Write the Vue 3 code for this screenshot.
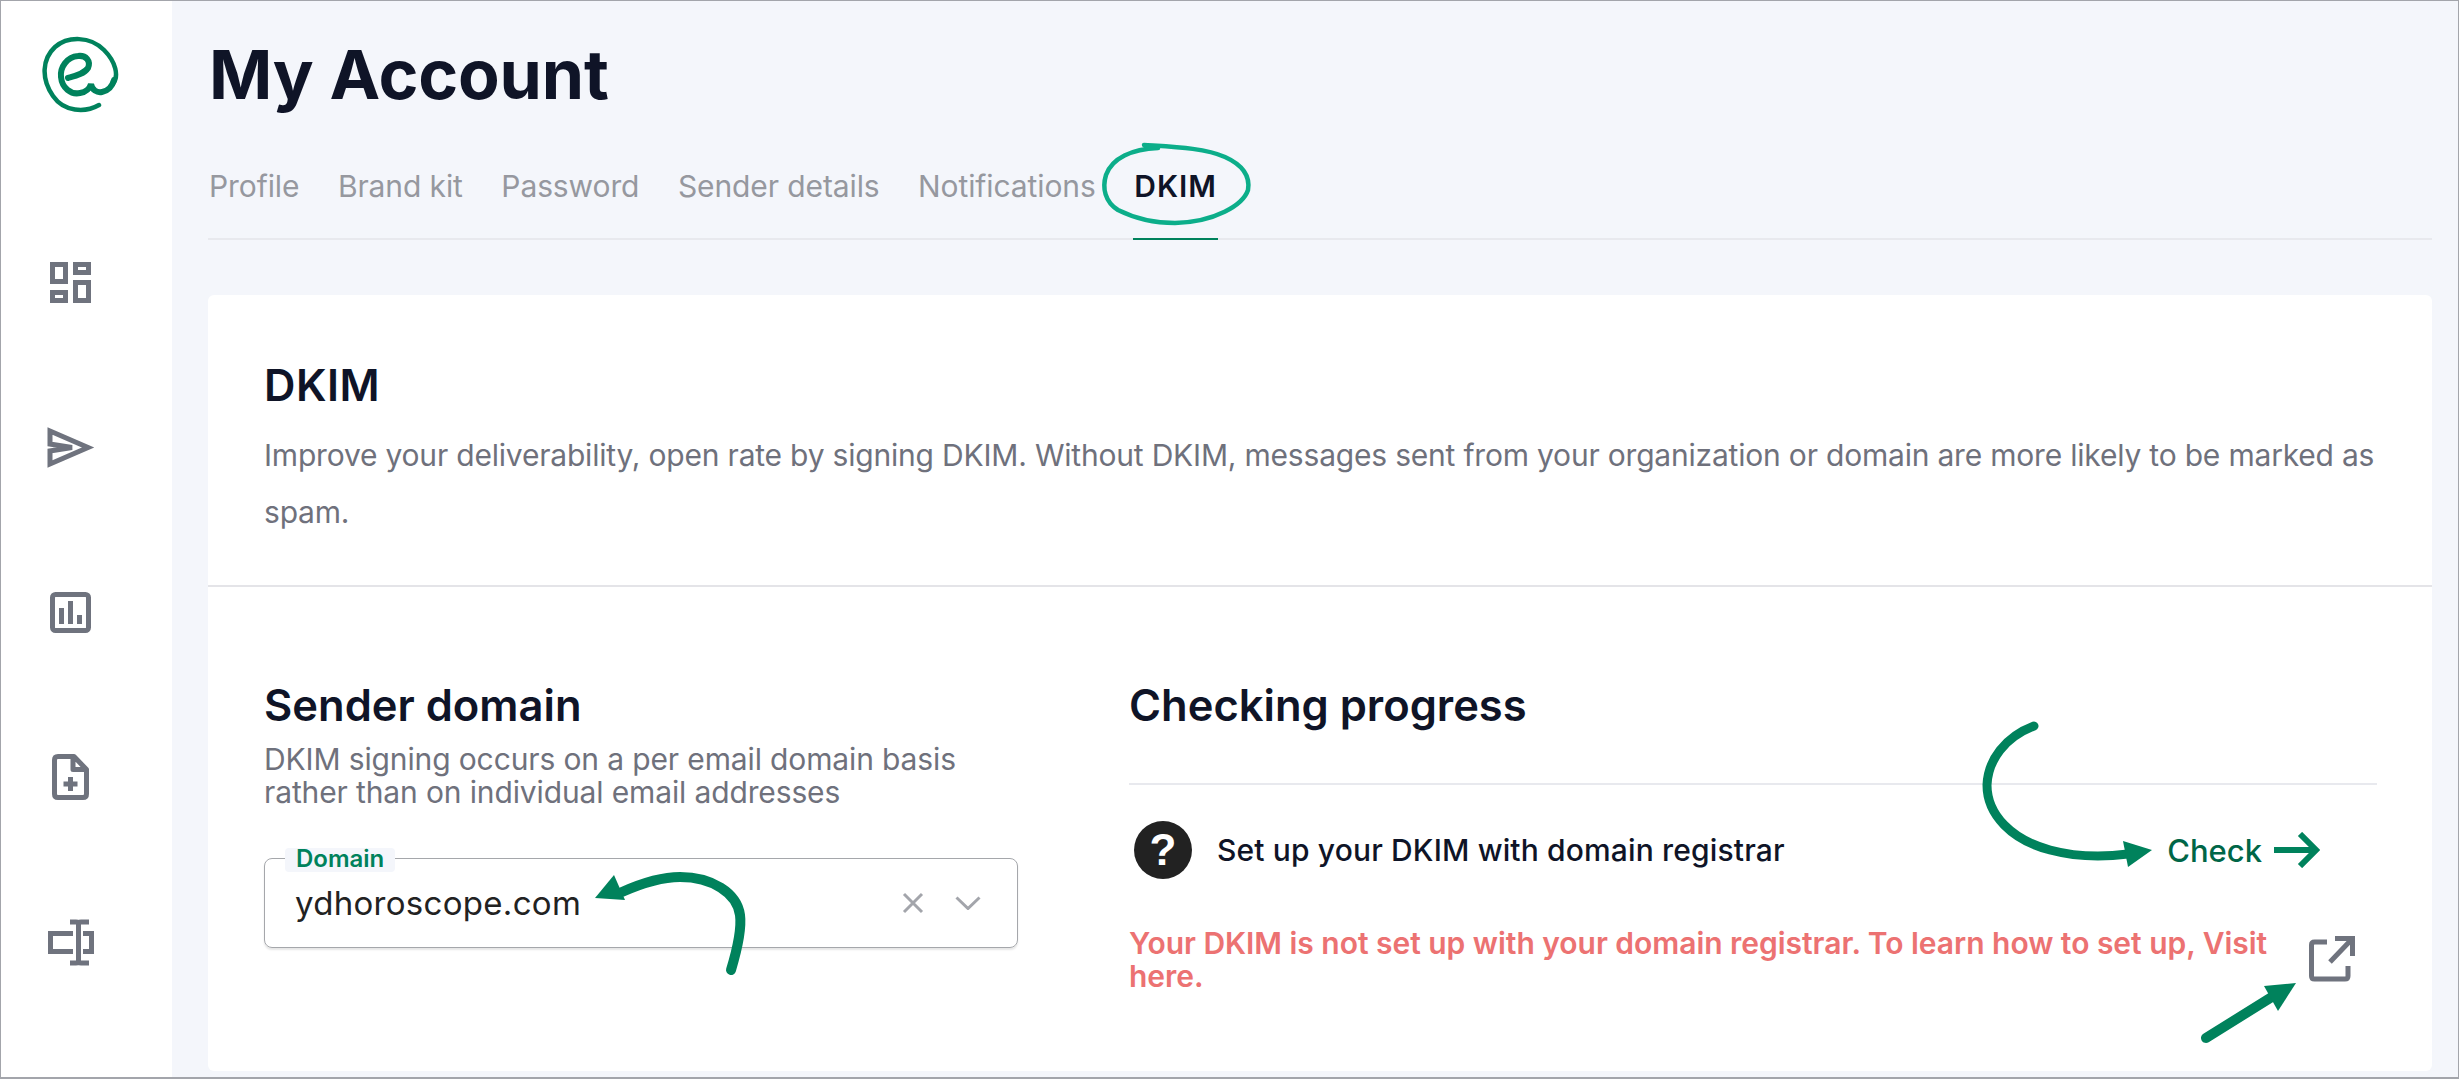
<script setup>
const tabs = ['Profile', 'Brand kit', 'Password', 'Sender details', 'Notifications']
</script>

<template>
  <div class="app">
    <aside class="side">
      <svg class="logo" viewBox="40 34 80 80" fill="none" stroke="#00825c" stroke-linecap="round">
        <path stroke-width="4.500" d="M99 105C85 113 64 112 53 96C41 79 42 59 55 47C68 36 90 36 104 50C116 62 119 76 113 84" />
        <path stroke-width="6" d="M68 78C75 76 84 74 88 68C91 61 86 55 78 56C67 57 60 67 61 77C62 88 71 95 80 93C86 92 90 88 91 84C92 90 97 93 102 92C108 91 112 87 114 80" />
      </svg>
      <nav class="nav">
        <div class="nav-item">
          <svg viewBox="40 251 60 60" fill="none" stroke="#6f737e" stroke-width="5">
            <rect x="52.500" y="263.500" width="13" height="17" />
            <rect x="75.500" y="263.500" width="13" height="8" />
            <rect x="52.500" y="291.500" width="13" height="8" />
            <rect x="75.500" y="281.500" width="13" height="18" />
          </svg>
        </div>
        <div class="nav-item">
          <svg viewBox="40 416 60 60" fill="none" stroke="#6f737e" stroke-width="5">
            <path d="M50 430L88 446.500L50 463V450L72 446.500L50 443Z" />
          </svg>
        </div>
        <div class="nav-item">
          <svg viewBox="40 581 60 60" fill="none" stroke="#6f737e" stroke-width="5">
            <rect x="52.500" y="593.500" width="36" height="36" rx="3" />
            <path d="M61.500 607V623M70.500 600V623M79.500 614V623" />
          </svg>
        </div>
        <div class="nav-item">
          <svg viewBox="40 747 60 60" fill="none" stroke="#6f737e" stroke-width="5" stroke-linejoin="round">
            <path d="M74 756.500H58Q54.500 756.500 54.500 760V794Q54.500 797.500 58 797.500H83Q86.500 797.500 86.500 794V769.500ZM73 756.500V769.500H86.500" />
            <path d="M70.500 777V791M63.500 784H77.500" />
          </svg>
        </div>
        <div class="nav-item">
          <svg viewBox="40 912 60 60" fill="none" stroke="#6f737e" stroke-width="5">
            <path d="M73 933.500H50.500V951.500H73M83 933.500H91.500V951.500H83" />
            <path d="M78.500 925V960M70 922H76Q78.500 922 78.500 925Q78.500 922 81 922H89M70 963H76Q78.500 963 78.500 960Q78.500 963 81 963H89" />
          </svg>
        </div>
      </nav>
    </aside>

    <main class="main">
      <h1 class="title">My Account</h1>
      <div class="tabs">
        <span v-for="t in tabs" :key="t" class="tab">{{ t }}</span>
        <span class="tab active">DKIM</span>
      </div>

      <section class="card">
        <header class="card-head">
          <h2 class="h2 wide">DKIM</h2>
          <p class="lead">Improve your deliverability, open rate by signing DKIM. Without DKIM, messages sent from your organization or domain are more likely to be marked as spam.</p>
        </header>
        <div class="card-body">
          <div class="col-left">
            <h2 class="h2">Sender domain</h2>
            <p class="sub">DKIM signing occurs on a per email domain basis<br />rather than on individual email addresses</p>
            <div class="select">
              <span class="float">Domain</span>
              <span class="value">ydhoroscope.com</span>
              <svg class="x" viewBox="0 0 22 22" fill="none" stroke="#a3a5ab" stroke-width="3"><path d="M2 2L20 20M20 2L2 20" /></svg>
              <svg class="chev" viewBox="0 0 26 14" fill="none" stroke="#a3a5ab" stroke-width="3"><path d="M1.500 1.500L13 12.500L24.500 1.500" /></svg>
            </div>
          </div>
          <div class="col-right">
            <h2 class="h2">Checking progress</h2>
            <div class="rule"></div>
            <div class="row">
              <span class="q">?</span>
              <span class="step">Set up your DKIM with domain registrar</span>
              <span class="check">Check</span>
              <svg class="check-arrow" viewBox="0 0 46 36" fill="none" stroke="#00825c" stroke-width="6"><path d="M0 18H42M26 2L42 18L26 34" /></svg>
            </div>
            <div class="err">
              <p class="err-text">Your DKIM is not set up with your domain registrar. To learn how to set up, Visit here.</p>
              <svg class="ext" viewBox="0 0 46 46" fill="none" stroke="#6f737e" stroke-width="5">
                <path d="M18 6H5.500Q2.500 6 2.500 9V40Q2.500 43 5.500 43H36Q39 43 39 40V30" />
                <path d="M26 2.500H43.500V20M43.500 2.500L21 26" />
              </svg>
            </div>
          </div>
        </div>
      </section>
    </main>

    <svg class="overlay" viewBox="0 0 2459 1079" fill="none">
      <path stroke="#0cae8a" stroke-width="4.500" stroke-linecap="round" d="M1144 145C1175 147 1205 148 1225 157C1245 166 1250 178 1248 190C1243 205 1215 222 1175 223C1150 223 1130 216 1118 210C1105 202 1102 188 1106 175C1112 158 1132 149 1158 148" />
      <g stroke="#00825c" stroke-width="9" stroke-linecap="round">
        <path stroke-width="10" d="M731 970C737 950 742 930 740 915C737 893 712 877 680 877C660 877 640 884 622 892" />
        <path d="M2034 726C2005 737 1988 760 1987 785C1987 815 2012 840 2050 850C2080 858 2105 857 2128 854" />
        <path stroke-width="10" d="M2206 1038L2275 995" />
      </g>
      <g fill="#00825c">
        <path d="M595 898L614 875L625 900Z" />
        <path d="M2152 850L2123 841L2128 867Z" />
        <path d="M2296 983L2264 986L2278 1011Z" />
      </g>
    </svg>
  </div>
</template>

<style>
html, body { margin: 0; background: #f4f6fb; }
</style>

<style scoped>
.app {
  position: relative;
  box-sizing: border-box;
  width: 2459px;
  height: 1079px;
  border: 1px solid #a3a5ab;
  border-bottom-width: 2px;
  display: flex;
  overflow: hidden;
  background: #f4f6fb;
  font-family: Inter, "Liberation Sans", sans-serif;
  color: #0f1427;
}
.side {
  width: 171px;
  flex: none;
  background: #fff;
  box-sizing: border-box;
  padding: 33px 0 0 39px;
}
.logo { display: block; width: 80px; height: 80px; }
.nav { margin-top: 85px; }
.nav-item { height: 165px; display: flex; align-items: center; }
.nav-item svg { width: 60px; height: 60px; display: block; }
.main {
  flex: 1;
  min-width: 0;
  padding: 0 26px 0 36px;
}
.title {
  margin: 0 0 0 1px;
  height: 146px;
  box-sizing: border-box;
  padding-top: 32px;
  font-size: 68px;
  line-height: 82px;
  font-weight: 700;
  letter-spacing: -.2px;
}
.tabs {
  display: flex;
  gap: 36.500px;
  height: 93px;
  box-sizing: border-box;
  border-bottom: 2px solid #e8e9ee;
  font-size: 30px;
  line-height: 54px;
  letter-spacing: -.1px;
  padding-top: 12px;
}
.tab { color: #96989f; padding: 0 1px; }
.active {
  color: #0f1427;
  font-weight: 600;
  letter-spacing: 1px;
  border-bottom: 2px solid #00825c;
  box-sizing: border-box;
  height: 81px;
  margin-bottom: -2px;
}
.card {
  margin-top: 55px;
  background: #fff;
  border-radius: 6px;
  height: 776px;
  box-sizing: border-box;
}
.card-head {
  padding: 70px 56px 44px;
  border-bottom: 2px solid #e4e4e8;
}
.h2 {
  margin: 0;
  font-size: 43.500px;
  line-height: 40px;
  font-weight: 600;
}
.wide { letter-spacing: .5px; }
.lead {
  margin: 22px 0 0;
  font-size: 30px;
  line-height: 57px;
  color: #6f717c;
  letter-spacing: -.2px;
}
.card-body {
  display: grid;
  grid-template-columns: 754px 1fr;
  column-gap: 111px;
  padding: 98px 55px 0 56px;
}
.sub {
  margin: 18px 0 0;
  font-size: 30px;
  line-height: 33px;
  color: #6f717c;
  letter-spacing: -.13px;
}
.select {
  position: relative;
  margin-top: 49px;
  height: 90px;
  box-sizing: border-box;
  border: 1px solid #a5a7ab;
  border-radius: 8px;
  box-shadow: 0 2px 2px rgba(0, 0, 0, .1);
  display: flex;
  align-items: center;
  padding: 0 36px 0 30px;
}
.float {
  position: absolute;
  left: 20px;
  top: -11px;
  height: 24px;
  padding: 0 11px;
  background: #f4f6fb;
  border-radius: 4px;
  color: #00825c;
  font-size: 24px;
  line-height: 22px;
  font-weight: 600;
}
.value {
  flex: 1;
  font-size: 33px;
  line-height: 40px;
  color: #222;
  letter-spacing: .3px;
}
.x { width: 22px; height: 22px; }
.chev { width: 26px; height: 14px; margin-left: 31px; }
.rule { height: 2px; margin-top: 58px; background: #e8e9ee; }
.row {
  display: flex;
  align-items: center;
  margin-top: 36px;
  height: 58px;
  padding-left: 5px;
}
.q {
  width: 58px;
  height: 58px;
  border-radius: 50%;
  background: #222;
  color: #fff;
  font-size: 44px;
  line-height: 58px;
  font-weight: 700;
  text-align: center;
  font-family: "Liberation Sans", sans-serif;
}
.step {
  flex: 1;
  margin-left: 25px;
  font-size: 30px;
  font-weight: 500;
  letter-spacing: .15px;
}
.check {
  font-size: 31px;
  font-weight: 500;
  color: #006647;
}
.check-arrow { width: 46px; height: 36px; margin: 0 57px 0 12px; }
.err {
  display: flex;
  margin-top: 48px;
  padding-right: 22px;
}
.err-text {
  flex: 1;
  margin: 0;
  font-size: 30px;
  line-height: 33px;
  font-weight: 600;
  color: #ec7272;
  letter-spacing: -.03px;
  padding-right: 30px;
}
.ext { width: 46px; height: 46px; flex: none; margin-top: 9px; }
.overlay {
  position: absolute;
  left: -1px;
  top: -1px;
  width: 2459px;
  height: 1079px;
  pointer-events: none;
}
</style>
